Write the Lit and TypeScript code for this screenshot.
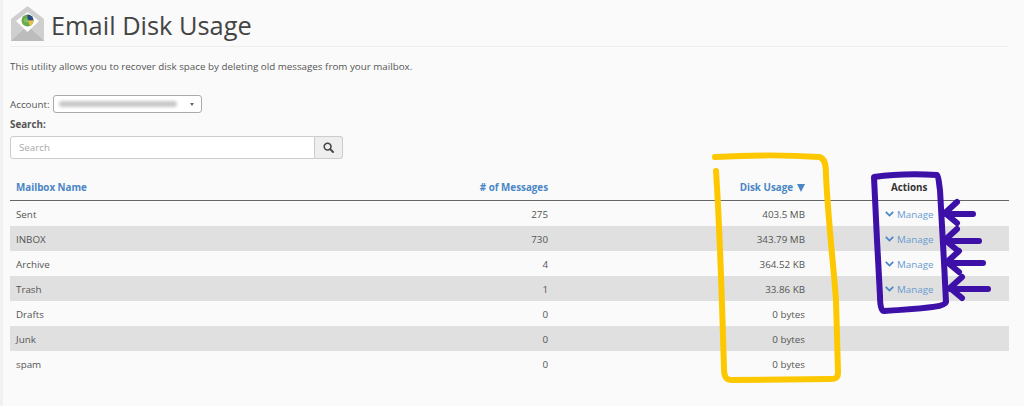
import { LitElement, html, css, svg } from "lit";
import { customElement } from "lit/decorators.js";

const rows = [
  ["Sent", "275", "403.5 MB", true],
  ["INBOX", "730", "343.79 MB", true],
  ["Archive", "4", "364.52 KB", true],
  ["Trash", "1", "33.86 KB", true],
  ["Drafts", "0", "0 bytes", false],
  ["Junk", "0", "0 bytes", false],
  ["spam", "0", "0 bytes", false],
] as const;

const arrows = [
  [214, 973, 945, 213],
  [241, 979, 945, 240],
  [263, 983, 947, 262],
  [289, 988, 950, 288],
];

@customElement("app-root")
export class AppRoot extends LitElement {
  static styles = css`
    :host {
      display: block;
      position: relative;
      width: 1024px;
      height: 406px;
      overflow: hidden;
      background: #fafafa;
      font-family: "Open Sans", sans-serif;
      font-size: 9.8px;
      color: #555;
      box-sizing: border-box;
      padding: 3px 15px 0 10px;
    }
    .edge {
      position: absolute;
      left: 0;
      top: 0;
      bottom: 0;
      width: 3px;
      background: #f1f1f1;
    }
    .head {
      display: flex;
      align-items: center;
      gap: 6px;
      height: 43px;
      border-bottom: 1px solid #eee;
    }
    .head svg {
      display: block;
      margin-top: -2px;
    }
    h1 {
      margin: 2px 0 0;
      font-size: 25.4px;
      font-weight: 400;
      color: #444;
      line-height: 1;
    }
    .intro {
      margin: 13px 0 0;
      line-height: 14px;
    }
    .account {
      display: flex;
      align-items: center;
      gap: 3px;
      margin-top: 21px;
      height: 18px;
    }
    .select {
      width: 135px;
      height: 16px;
      border: 1px solid #aaa;
      border-radius: 3px;
      background: #fff;
      display: flex;
      align-items: center;
      justify-content: space-between;
      padding: 0 7px 0 5px;
    }
    .smudge {
      width: 118px;
      height: 6px;
      background: #c9c9c9;
      border-radius: 3px;
      filter: blur(1.5px);
    }
    .caret {
      width: 0;
      height: 0;
      border-left: 2.5px solid transparent;
      border-right: 2.5px solid transparent;
      border-top: 3px solid #666;
    }
    .search-label {
      font-weight: 700;
      margin-top: 5px;
      line-height: 14px;
    }
    .search {
      display: flex;
      margin-top: 4px;
      width: 333px;
      height: 23px;
    }
    .input {
      flex: 1;
      background: #fff;
      border: 1px solid #ccc;
      border-radius: 3px 0 0 3px;
      color: #aaa;
      padding-left: 8px;
      display: flex;
      align-items: center;
    }
    .btn {
      width: 27px;
      background: #eee;
      border: 1px solid #ccc;
      border-left: 0;
      border-radius: 0 3px 3px 0;
      display: flex;
      align-items: center;
      justify-content: center;
    }
    .table {
      margin-top: 18px;
    }
    .row {
      display: grid;
      grid-template-columns: 300px 244px 257px 198px;
      height: 25px;
      align-items: center;
      padding-top: 1px;
      box-sizing: border-box;
    }
    .row.alt {
      background: #e0e0e0;
    }
    .row.header {
      height: 25px;
      padding-top: 0;
      padding-bottom: 1px;
      border-bottom: 1px solid #666;
      font-weight: 700;
      color: #4a86c5;
      margin-top: -1px;
    }
    .row > div {
      padding: 0 6px;
    }
    .num {
      text-align: right;
    }
    .usage {
      display: flex;
      justify-content: flex-end;
      align-items: center;
      gap: 4px;
    }
    .sort {
      width: 0;
      height: 0;
      border-left: 4.5px solid transparent;
      border-right: 4.5px solid transparent;
      border-top: 8px solid #4a86c5;
    }
    .row > .actions-head {
      color: #333;
      padding-left: 80px;
    }
    .row > .manage {
      display: flex;
      align-items: center;
      gap: 3px;
      color: #6a9bd0;
      padding-left: 74px;
    }
    .overlay {
      position: absolute;
      left: 0;
      top: 0;
      pointer-events: none;
    }
  `;

  render() {
    return html`
      <div class="edge"></div>
      <div class="head">
        <svg width="35" height="35" viewBox="0 0 35 35">
          <path d="M1 14 L17.5 1 L34 14 V37 H1 Z" fill="#cfcfcf" transform="translate(0 -1)" />
          <path d="M1 36 L14 24 H21 L34 36 Z" fill="#bcbcbc" transform="translate(0 -1)" />
          <path d="M6 15 L17.5 6 L29 15 L17.5 26 Z" fill="#fff" />
          <circle cx="17.5" cy="14.5" r="6" fill="#6aa84f" />
          <path d="M17.5 14.5 V8.5 A6 6 0 0 1 23.5 14.5 Z" fill="#2c4a86" />
          <path d="M17.5 14.5 H23.5 A6 6 0 0 1 20 20 Z" fill="#e2c04a" />
          <circle cx="16" cy="14.5" r="2.2" fill="#7fc060" />
        </svg>
        <h1>Email Disk Usage</h1>
      </div>
      <p class="intro">This utility allows you to recover disk space by deleting old messages from your mailbox.</p>
      <div class="account">
        <span>Account:</span>
        <div class="select"><div class="smudge"></div><div class="caret"></div></div>
      </div>
      <div class="search-label">Search:</div>
      <div class="search">
        <div class="input">Search</div>
        <div class="btn">
          <svg width="11" height="11" viewBox="0 0 11 11" fill="none" stroke="#444" stroke-width="1.6">
            <circle cx="4.6" cy="4.6" r="3.4" />
            <path d="M7.2 7.2 L10 10" stroke-linecap="round" stroke-width="1.9" />
          </svg>
        </div>
      </div>
      <div class="table">
        <div class="row header">
          <div>Mailbox Name</div>
          <div class="num"># of Messages</div>
          <div class="usage">Disk Usage <span class="sort"></span></div>
          <div class="actions-head">Actions</div>
        </div>
        ${rows.map(
          (r, i) => html`<div class="row ${i % 2 ? "alt" : ""}">
            <div>${r[0]}</div>
            <div class="num">${r[1]}</div>
            <div class="num">${r[2]}</div>
            <div class="${r[3] ? "manage" : ""}">
              ${r[3]
                ? html`<svg width="9" height="6" viewBox="0 0 9 6" fill="none" stroke="#4a86c5" stroke-width="1.7"><path d="M0.8 0.9 L4.5 4.6 L8.2 0.9" /></svg>Manage`
                : ""}
            </div>
          </div>`
        )}
      </div>
      <svg class="overlay" width="1024" height="406" fill="none" stroke-linecap="round" stroke-linejoin="round">
        <path d="M715 157 C750 155 790 155 819 157 C825 158 826 165 826 175 C828 220 834 270 836 300 L838 372 C838 378 836 379 830 379 L732 380 C726 380 724 377 724 368 C722 300 720 230 716 171" stroke="#fdc800" stroke-width="6" />
        ${svg`<path d="M874 177 C895 174 920 174 937 175 C939 177 939 185 940 190 L944 262 L946 302 C945 306 935 308 884 311 C881 311 880 305 880 296 L877 240 Z" stroke="#3d10a8" stroke-width="6" />`}
        ${arrows.map(
          ([y, x1, x2, tip]) => svg`<path d="M${x1} ${y} H${x2} M${x2 + 12} ${tip - 11} L${x2} ${tip} L${x2 + 12} ${tip + 10}" stroke="#3d10a8" stroke-width="6" />`
        )}
      </svg>
    `;
  }
}
